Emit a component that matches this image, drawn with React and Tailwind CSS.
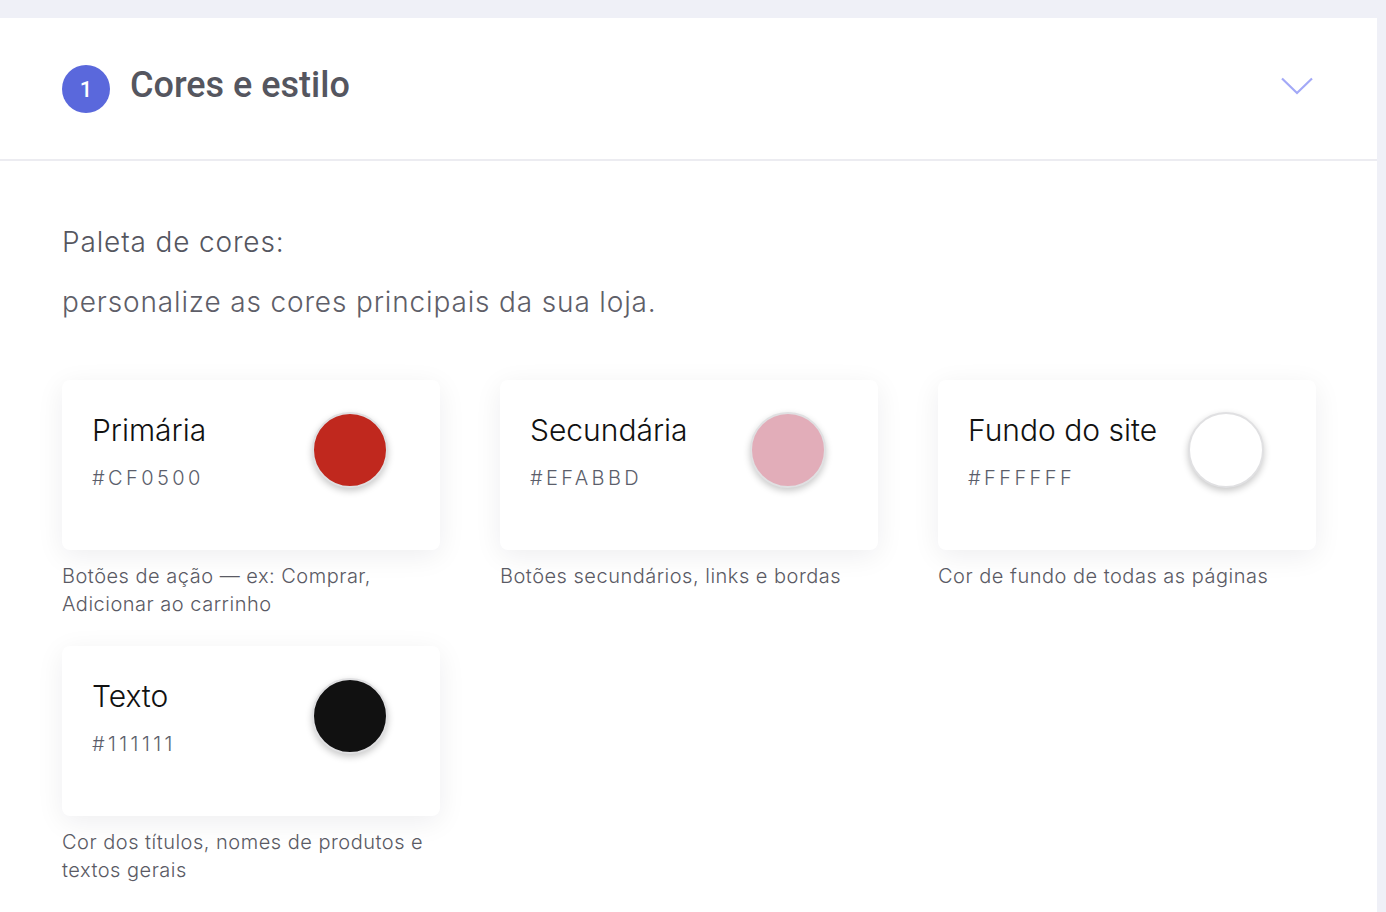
const colors = [
  {
    name: 'Primária',
    hex: '#CF0500',
    swatch: 'bg-[#c0281e]',
    hint: 'Botões de ação — ex: Comprar, Adicionar ao carrinho',
  },
  {
    name: 'Secundária',
    hex: '#EFABBD',
    swatch: 'bg-[#e2adb9]',
    hint: 'Botões secundários, links e bordas',
  },
  {
    name: 'Fundo do site',
    hex: '#FFFFFF',
    swatch: 'bg-white',
    hint: 'Cor de fundo de todas as páginas',
  },
  {
    name: 'Texto',
    hex: '#111111',
    swatch: 'bg-[#111111]',
    hint: 'Cor dos títulos, nomes de produtos e textos gerais',
  },
]

function Chevron() {
  return (
    <svg width="32" height="18" viewBox="0 0 32 18" fill="none" className="text-[#a3a9f7]">
      <polyline points="1,1.5 16,16 31,1.5" stroke="currentColor" strokeWidth="2.2" />
    </svg>
  )
}

function ColorCard({ name, hex, swatch, hint }) {
  return (
    <div>
      <div className="flex h-[170px] justify-between rounded-lg bg-white pl-[30px] pr-[52px] pt-[29px] shadow-[0_6px_28px_rgba(20,20,40,0.07)]">
        <div>
          <div className="text-[30px] leading-[42px] text-[#111]">{name}</div>
          <div className="mt-[12px] text-[20px] leading-[30px] tracking-[3.4px] text-[#5b5e6b]">
            {hex}
          </div>
        </div>
        <div
          className={`mt-[3px] h-[76px] w-[76px] shrink-0 rounded-full border-2 border-[#e0e0e2] shadow-[0_3px_7px_rgba(0,0,0,0.22)] ${swatch}`}
        />
      </div>
      <p className="mt-3 text-[20px] leading-[28px] tracking-[0.5px] text-[#5a5a64]">{hint}</p>
    </div>
  )
}

export default function App() {
  return (
    <div className="min-h-screen bg-[#eff0f7] pt-[18px] pr-[9px] font-['Inter',sans-serif] font-light">
      <div className="min-h-[894px] bg-white">
        <div className="flex h-[143px] items-center border-b-2 border-[#ececf1] pl-[62px] pr-[64px]">
          <div className="flex h-12 w-12 items-center justify-center rounded-full bg-[#5a68dc] pt-[1px] font-['Roboto',sans-serif] text-[22px] font-medium text-white">
            1
          </div>
          <h2 className="mb-2 ml-5 font-['Roboto',sans-serif] text-[36px] font-medium text-[#55565f]">
            Cores e estilo
          </h2>
          <div className="mb-[5px] ml-auto">
            <Chevron />
          </div>
        </div>

        <div className="px-[62px] pb-8 pt-[61px]">
          <p className="text-[28px] leading-[40px] tracking-[0.85px] text-[#55565f]">
            Paleta de cores:
          </p>
          <p className="mt-5 text-[28px] leading-[40px] tracking-[0.85px] text-[#5e5e68]">
            personalize as cores principais da sua loja.
          </p>

          <div className="mt-[58px] grid grid-cols-[378px_378px_378px] gap-x-[60px] gap-y-[28px]">
            {colors.map((c) => (
              <ColorCard key={c.name} {...c} />
            ))}
          </div>
        </div>
      </div>
    </div>
  )
}
